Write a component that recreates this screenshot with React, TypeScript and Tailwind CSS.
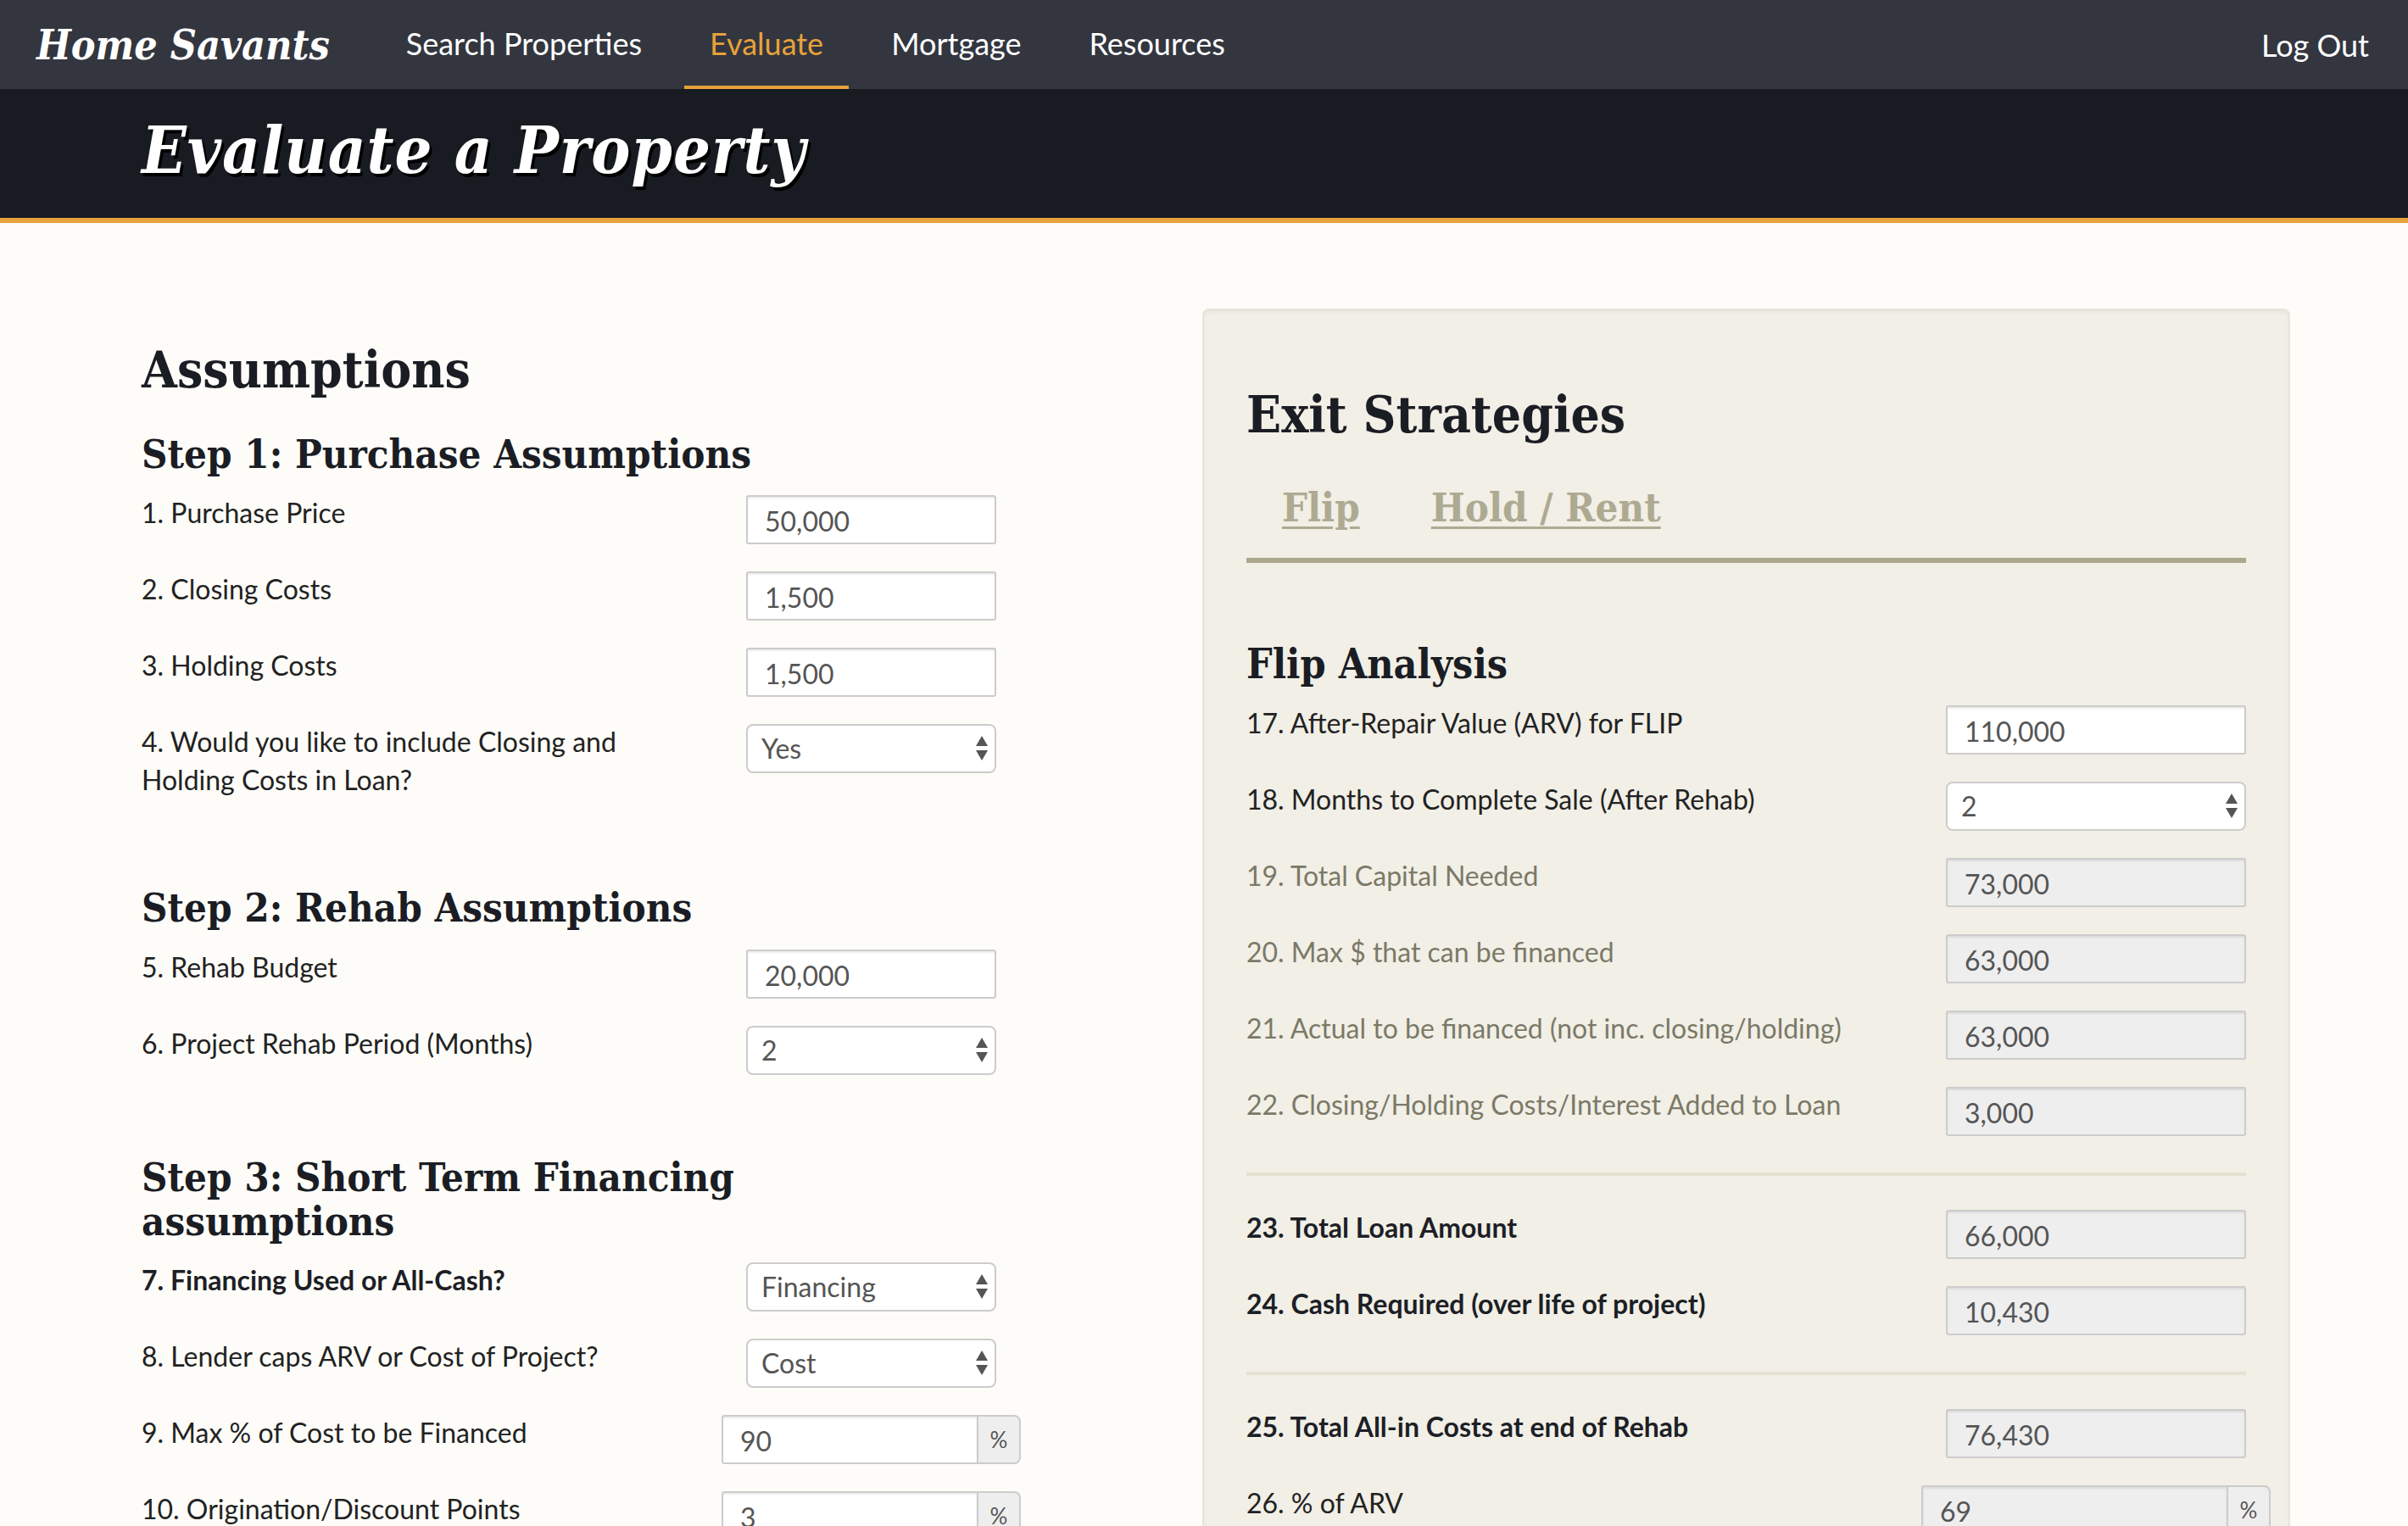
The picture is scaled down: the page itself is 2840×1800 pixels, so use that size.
import React from 'react';

type Kind = 'input' | 'select' | 'group';

interface FieldProps {
  label: string;
  value: string;
  kind?: Kind;
  readOnly?: boolean;
  bold?: boolean;
  muted?: boolean;
  cell: string;
  labelPad?: string;
}

const navLinks = ['Search Properties', 'Evaluate', 'Mortgage', 'Resources'];

const SelectArrows = () => (
  <svg width="14" height="30" viewBox="0 0 14 30" className="shrink-0">
    <path d="M0 12 L7 0 L14 12 Z" fill="#555" />
    <path d="M0 17 L14 17 L7 29 Z" fill="#555" />
  </svg>
);

const Field: React.FC<FieldProps> = ({ label, value, kind = 'input', readOnly, bold, muted, cell, labelPad = '' }) => {
  const bg = readOnly ? 'bg-[#eeeeee]' : 'bg-white';
  return (
    <div className="flex items-start mb-[32px]">
      <div
        className={`flex-1 text-[32px] leading-[45px] -mt-[2px] ${labelPad} ${
          bold ? 'font-bold text-[#1d1f26]' : muted ? 'text-[#7b7967]' : 'text-[#222]'
        }`}
      >
        {label}
      </div>
      <div className={`${cell} flex justify-center shrink-0`}>
        {kind === 'input' && (
          <div
            className={`w-full shrink-0 h-[58px] ${bg} border-2 border-[#cccccc] rounded-[3px] shadow-[inset_0_2px_2px_rgba(0,0,0,0.08)] flex items-center pl-[20px] text-[32px] text-[#555] pt-[4px]`}
          >
            {value}
          </div>
        )}
        {kind === 'select' && (
          <div
            className={`w-full shrink-0 h-[58px] ${bg} border-2 border-[#cccccc] rounded-[8px] flex items-center justify-between pl-[16px] pr-[8px] text-[32px] text-[#555]`}
          >
            <span>{value}</span>
            <SelectArrows />
          </div>
        )}
        {kind === 'group' && (
          <div className="shrink-0 flex h-[58px] w-[calc(100%+58px)]">
            <div
              className={`flex-1 ${bg} border-2 border-[#cccccc] rounded-l-[3px] shadow-[inset_0_2px_2px_rgba(0,0,0,0.08)] flex items-center pl-[20px] text-[32px] text-[#555] pt-[4px]`}
            >
              {value}
            </div>
            <div className="w-[50px] bg-[#eeeeee] border-2 border-l-0 border-[#cccccc] rounded-r-[8px] flex items-center justify-center text-[26px] text-[#555]">
              %
            </div>
          </div>
        )}
      </div>
    </div>
  );
};

const serif = "font-['DejaVu_Serif_Condensed','DejaVu_Serif',serif] font-stretch-condensed font-bold";

export default function App() {
  const leftCell = 'w-[295px]';
  const rightCell = 'w-[354px]';
  return (
    <div className="min-h-screen bg-[#fdfcf8] font-['Lato',sans-serif] overflow-hidden">
      {/* Top nav */}
      <nav className="h-[105px] bg-[#33363f] flex items-stretch">
        <div className={`pl-[43px] flex items-center text-white text-[48px] italic ${serif}`}>Home Savants</div>
        <ul className="flex items-stretch ml-[60px] gap-[20px]">
          {navLinks.map(link => (
            <li
              key={link}
              className={`flex items-center px-[30px] text-[36px] border-b-[4px] ${
                link === 'Evaluate' ? 'text-[#e8a23a] border-[#e8a23a]' : 'text-white border-transparent'
              }`}
            >
              {link}
            </li>
          ))}
        </ul>
        <div className="ml-auto pr-[16px] flex items-center">
          <span className="px-[30px] text-[36px] text-white">Log Out</span>
        </div>
      </nav>

      {/* Page title */}
      <header className="h-[158px] bg-[#181b22] border-b-[6px] border-[#e8a23a] flex items-center pl-[167px]">
        <h1 className={`text-white text-[77px] italic tracking-[1px] ${serif} [text-shadow:3px_4px_0_#000] -mt-[6px]`}>
          Evaluate a Property
        </h1>
      </header>

      <main className="flex items-start pl-[167px]">
        {/* Assumptions */}
        <section className="w-[1008px] pt-[140px]">
          <h2 className={`text-[60px] leading-[1.1] text-[#1b1d24] ${serif}`}>Assumptions</h2>

          <h3 className={`mt-[42px] mb-[23px] text-[47px] leading-[50px] text-[#1b1d24] ${serif}`}>
            Step 1: Purchase Assumptions
          </h3>
          <Field cell={leftCell} labelPad="pr-[110px]" label="1. Purchase Price" value="50,000" />
          <Field cell={leftCell} labelPad="pr-[110px]" label="2. Closing Costs" value="1,500" />
          <Field cell={leftCell} labelPad="pr-[110px]" label="3. Holding Costs" value="1,500" />
          <Field
            cell={leftCell}
            labelPad="pr-[110px]"
            kind="select"
            label="4. Would you like to include Closing and Holding Costs in Loan?"
            value="Yes"
          />

          <h3 className={`mt-[104px] mb-[24px] text-[47px] leading-[50px] text-[#1b1d24] ${serif}`}>
            Step 2: Rehab Assumptions
          </h3>
          <Field cell={leftCell} labelPad="pr-[110px]" label="5. Rehab Budget" value="20,000" />
          <Field cell={leftCell} labelPad="pr-[110px]" kind="select" label="6. Project Rehab Period (Months)" value="2" />

          <h3 className={`mt-[95px] mb-[22px] text-[47px] leading-[52px] text-[#1b1d24] max-w-[900px] ${serif}`}>
            Step 3: Short Term Financing assumptions
          </h3>
          <Field cell={leftCell} labelPad="pr-[110px]" kind="select" bold label="7. Financing Used or All-Cash?" value="Financing" />
          <Field cell={leftCell} labelPad="pr-[110px]" kind="select" label="8. Lender caps ARV or Cost of Project?" value="Cost" />
          <Field cell={leftCell} labelPad="pr-[110px]" kind="group" label="9. Max % of Cost to be Financed" value="90" />
          <Field cell={leftCell} labelPad="pr-[110px]" kind="group" label="10. Origination/Discount Points" value="3" />
        </section>

        {/* Exit strategies */}
        <section className="ml-[243px] w-[1283px] min-h-[1500px] mt-[101px] bg-[#f1efe6] border-2 border-[#e7e4da] rounded-[8px] shadow-[inset_0_3px_4px_rgba(0,0,0,0.04)] px-[50px] pt-[90px]">
          <h2 className={`text-[60px] leading-[1.1] text-[#1b1d24] ${serif}`}>Exit Strategies</h2>

          <div className="mt-[52px] flex border-b-[6px] border-[#aca88e]">
            {['Flip', 'Hold / Rent'].map(tab => (
              <div
                key={tab}
                className={`px-[42px] pb-[34px] text-[47px] leading-[50px] text-[#aeaa92] underline decoration-[3px] underline-offset-[6px] ${serif}`}
              >
                {tab}
              </div>
            ))}
          </div>

          <h3 className={`mt-[94px] mb-[24px] text-[48px] leading-[50px] text-[#1b1d24] ${serif}`}>Flip Analysis</h3>
          <Field cell={rightCell} label="17. After-Repair Value (ARV) for FLIP" value="110,000" />
          <Field cell={rightCell} kind="select" label="18. Months to Complete Sale (After Rehab)" value="2" />
          <Field cell={rightCell} muted readOnly label="19. Total Capital Needed" value="73,000" />
          <Field cell={rightCell} muted readOnly label="20. Max $ that can be financed" value="63,000" />
          <Field cell={rightCell} muted readOnly label="21. Actual to be financed (not inc. closing/holding)" value="63,000" />
          <Field cell={rightCell} muted readOnly label="22. Closing/Holding Costs/Interest Added to Loan" value="3,000" />

          <div className="mt-[43px] mb-[40px] h-[4px] bg-[#e5e1d0]" />
          <Field cell={rightCell} bold readOnly label="23. Total Loan Amount" value="66,000" />
          <Field cell={rightCell} bold readOnly label="24. Cash Required (over life of project)" value="10,430" />

          <div className="mt-[43px] mb-[40px] h-[4px] bg-[#e5e1d0]" />
          <Field cell={rightCell} bold readOnly label="25. Total All-in Costs at end of Rehab" value="76,430" />
          <Field cell={rightCell} readOnly kind="group" label="26. % of ARV" value="69" />
        </section>
      </main>
    </div>
  );
}
